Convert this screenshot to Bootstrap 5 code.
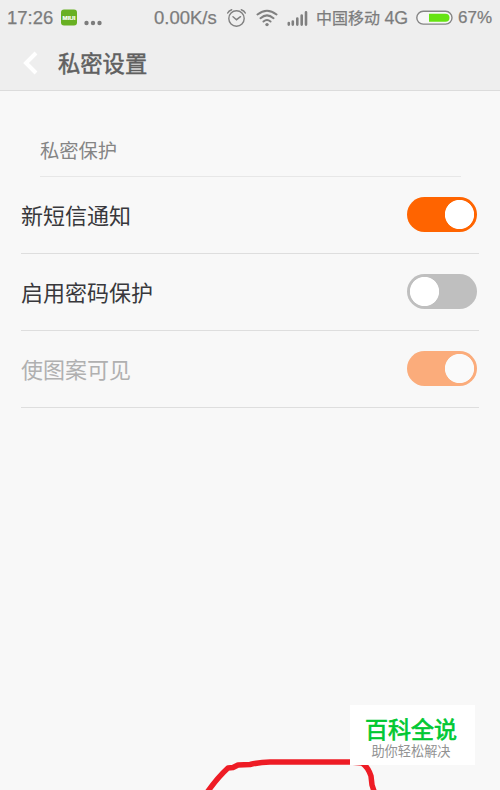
<!DOCTYPE html>
<html lang="zh-CN">
<head>
<meta charset="utf-8">
<meta name="viewport" content="width=device-width, initial-scale=1">
<title>私密设置</title>
<link href="https://cdn.jsdelivr.net/npm/bootstrap@5.3.0/dist/css/bootstrap.min.css" rel="stylesheet">
<style>
body{font-family:"Liberation Sans","Noto Sans CJK SC",sans-serif;background:#f8f8f8;color:#38383c}
.screen{width:500px;height:790px}
.top-area{height:91px;background:#eee;border-bottom:1px solid #dcdcdc}
.status{height:36px;padding-left:7px;color:#7c7c7c;font-size:18.5px;line-height:36px;white-space:nowrap;-webkit-text-stroke:.25px #7c7c7c}
.status svg{display:block;flex:none}
.status span{flex:none}
.clock{width:54px}
.speed{width:73px;margin-left:50px}
.signals{margin-left:-1px}
.carrier{width:100px;margin-left:8px;font-size:16px}
.carrier .net{font-size:17.8px}
.percent{font-size:17px;margin-left:5px}
.title-row{height:54px;padding-left:22px}
.title-row h1{font-size:22.3px;line-height:54px;color:#606060;font-weight:400;margin-left:20px;padding-top:3px;-webkit-text-stroke:.5px #606060}
.section-head{margin:33px 39px 0 40px;height:53px;font-size:19.3px;line-height:55px;color:#858585;border-bottom:1px solid #e7e7e7}
.setting{margin:0 21px;height:77px;border-bottom:1px solid #dedede;font-size:22px;padding-right:2px}
.setting .form-check-input{width:70px;height:35px;border:0;margin:0 0 1px;box-shadow:none;background-color:#bfbfbf;background-image:radial-gradient(circle at 50% 50%,#fff 14.2px,transparent 15px);background-repeat:no-repeat;background-size:35px 35px;background-position:0 0;opacity:1}
.setting .form-check-input:checked{background-color:#ff6400;background-position:right 0}
.setting.dim{color:#b0b0b0}
.setting.dim .form-check-input:checked{background-color:#fbac7b;background-image:radial-gradient(circle at 50% 50%,#fafafa 14.2px,transparent 15px)}
.setting label{opacity:1!important;padding-top:2px}
.scribble{left:195px;top:750px}
.brand{left:350px;top:705px;width:125px;height:60px;background:#fff}
.brand-name{font-size:23px;line-height:26px;font-weight:400;color:#00c832;-webkit-text-stroke:.7px #00c832;margin-top:12px;padding-right:3px}
.brand-sub{font-size:13.2px;line-height:16px;color:#929292;padding:1px 3px 0 0}
</style>
</head>
<body>
<main class="screen position-relative overflow-hidden">
<header class="top-area">
  <div class="status d-flex align-items-center">
    <span class="clock">17:26</span>
    <svg width="43" height="24" viewBox="61 6 43 24"><rect x="61" y="9.500" width="16" height="16" rx="3" fill="#68b022"/><text x="69" y="19.600" font-size="6" font-weight="bold" text-anchor="middle" textLength="13" lengthAdjust="spacingAndGlyphs" fill="#fff" stroke="#fff" stroke-width=".2">MIUI</text><g fill="#7c7c7c"><circle cx="86.500" cy="23" r="2.200"/><circle cx="93" cy="23" r="2.200"/><circle cx="99.500" cy="23" r="2.200"/></g></svg>
    <span class="speed">0.00K/s</span>
    <svg class="signals" width="82" height="24" viewBox="226 5 82 24" fill="none" stroke="#808080" stroke-linecap="round"><circle cx="236.500" cy="17.500" r="7.700" stroke-width="1.400"/><path d="M233 15.700l3.500 3 4-3M227.700 12q1-2.300 4-3.300M245.300 12q-1-2.300-4-3.300" stroke-width="1.500"/><path d="M257.500 13.500Q267 6 276.500 13.500M260.500 17.200Q267 11.600 273.500 17.200M263.500 20.500Q267 17.500 270.500 20.500" stroke-width="2"/><circle cx="267" cy="23.600" r="1.700" fill="#808080" stroke="none"/><path d="M288.800 23.600v-1.500M292.800 23.600v-3M297.300 23.600v-6M301.700 23.600v-9M306 23.600v-12.300" stroke-width="2.600"/></svg>
    <span class="carrier">中国移动 <span class="net">4G</span></span>
    <svg width="37" height="16" viewBox="0 0 37 16"><rect x=".8" y="1.300" width="35.200" height="12.800" rx="6.400" fill="#f6f6f6" stroke="#858585" stroke-width="1.400"/><path d="M13 3.700h16.500a4 4 0 0 1 0 8H13z" fill="#66e312"/></svg>
    <span class="percent">67%</span>
  </div>
  <div class="title-row d-flex align-items-center">
    <svg width="16" height="24" viewBox="0 0 16 24" fill="none" stroke="#fff" stroke-width="4"><path d="M14 2L4 12l10 10"/></svg>
    <h1 class="mb-0">私密设置</h1>
  </div>
</header>
<h2 class="section-head mb-0 fw-normal">私密保护</h2>
<div class="setting d-flex align-items-center justify-content-between"><label for="sms">新短信通知</label><div class="form-switch p-0 d-flex"><input class="form-check-input" type="checkbox" role="switch" id="sms" checked></div></div>
<div class="setting d-flex align-items-center justify-content-between"><label for="pwd">启用密码保护</label><div class="form-switch p-0 d-flex"><input class="form-check-input" type="checkbox" role="switch" id="pwd"></div></div>
<div class="setting dim d-flex align-items-center justify-content-between"><label for="pattern">使图案可见</label><div class="form-switch p-0 d-flex"><input class="form-check-input" type="checkbox" role="switch" id="pattern" checked disabled></div></div>
<svg class="scribble position-absolute" width="190" height="40" viewBox="195 750 190 40"><path d="M206 794Q217 778 228 768L233 767.500 238 765 250 764.500Q260 762.200 270 762H350L362 763Q368 767 371 776L372 785 375 794" fill="none" stroke="#ee1c25" stroke-width="5.500" stroke-linejoin="round"/></svg>
<aside class="brand position-absolute text-center"><div class="brand-name">百科全说</div><div class="brand-sub">助你轻松解决</div></aside>
</main>
<script src="https://cdn.jsdelivr.net/npm/bootstrap@5.3.0/dist/js/bootstrap.bundle.min.js"></script>
</body>
</html>
